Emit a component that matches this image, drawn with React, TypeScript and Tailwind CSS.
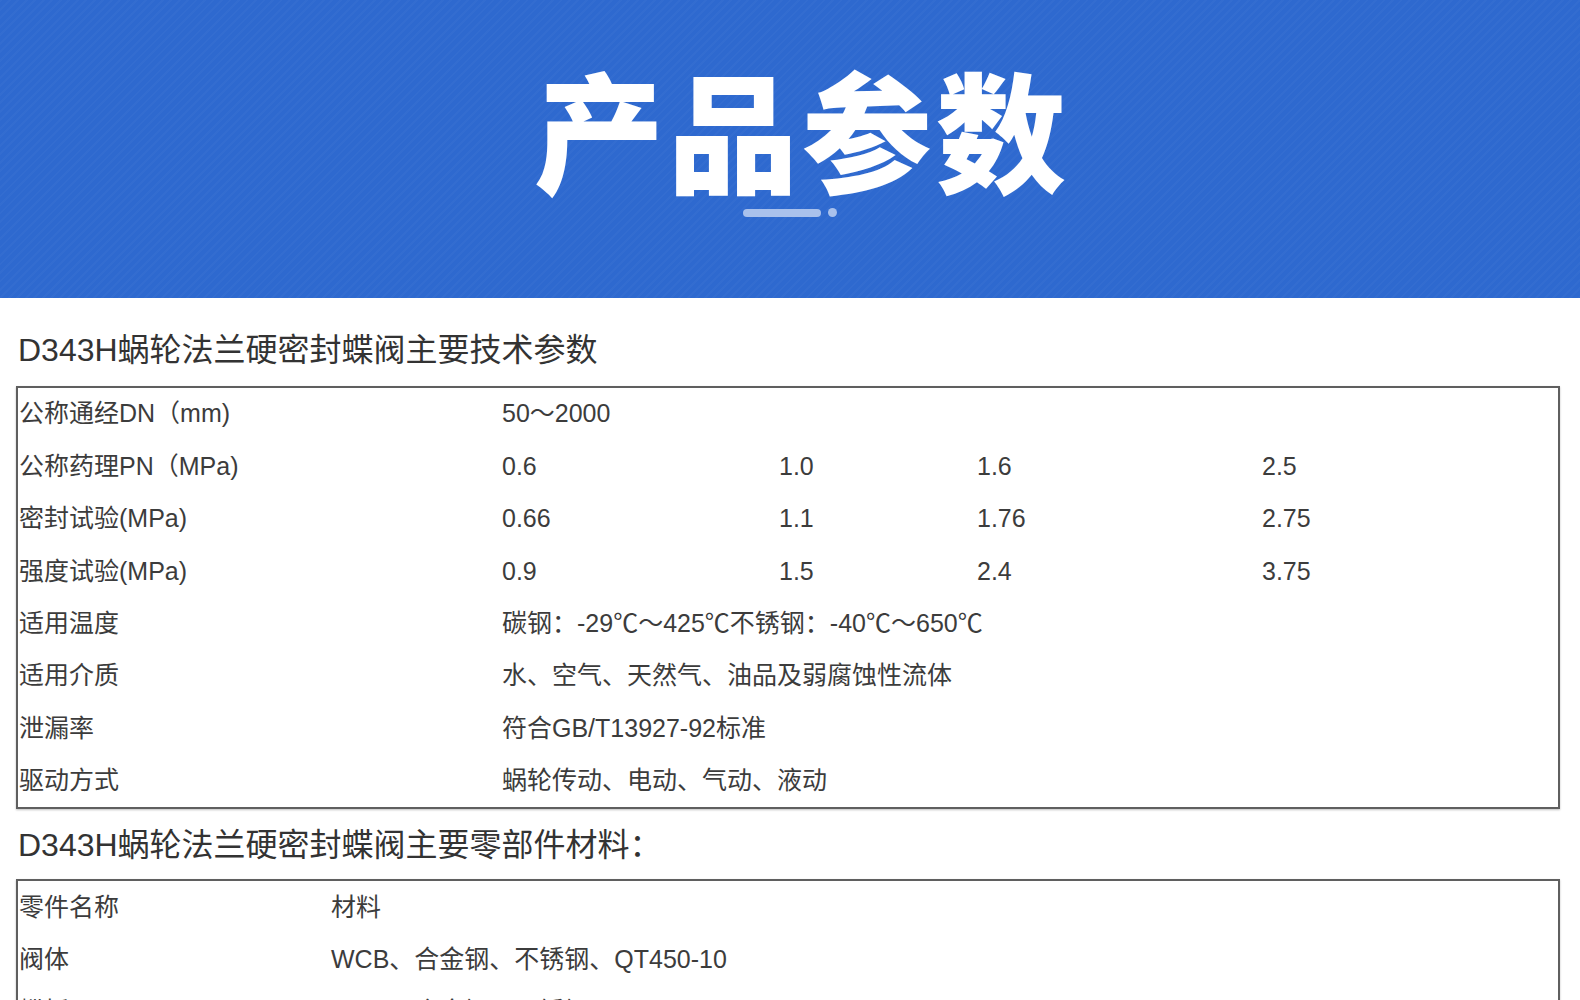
import React from 'react';

const FONT = { fontFamily: '"Liberation Sans", "Noto Sans CJK SC", sans-serif' };

type Row = { label: string; values: string[] };

const specRows: Row[] = [
    { label: '公称通经DN（mm)', values: ['50～2000'] },
    { label: '公称药理PN（MPa)', values: ['0.6', '1.0', '1.6', '2.5'] },
    { label: '密封试验(MPa)', values: ['0.66', '1.1', '1.76', '2.75'] },
    { label: '强度试验(MPa)', values: ['0.9', '1.5', '2.4', '3.75'] },
    { label: '适用温度', values: ['碳钢：-29℃～425℃不锈钢：-40℃～650℃'] },
    { label: '适用介质', values: ['水、空气、天然气、油品及弱腐蚀性流体'] },
    { label: '泄漏率', values: ['符合GB/T13927-92标准'] },
    { label: '驱动方式', values: ['蜗轮传动、电动、气动、液动'] },
];

const partRows = [
    ['零件名称', '材料'],
    ['阀体', 'WCB、合金钢、不锈钢、QT450-10'],
    ['蝶板', 'WCB、合金钢、不锈钢'],
    ['阀杆', '2Cr13、不锈钢'],
    ['密封面', '不锈钢、硬质合金'],
];

function SpecTable() {
    return (
        <div className="mx-[16px] w-[1544px] border-2 border-[#5f5f5f] shadow-[0_1px_2px_rgba(0,0,0,0.25)]">
            {specRows.map((row) => (
                <div
                    key={row.label}
                    className="grid grid-cols-[484px_277px_198px_285px_1fr] h-[52.4px] items-center text-[25px] text-[#3c3c3c]"
                >
                    <div className="pl-[1px] whitespace-nowrap">{row.label}</div>
                    {row.values.length === 1 ? (
                        <div className="col-span-4 whitespace-nowrap">{row.values[0]}</div>
                    ) : (
                        row.values.map((v, i) => (
                            <div key={i} className="whitespace-nowrap">{v}</div>
                        ))
                    )}
                </div>
            ))}
        </div>
    );
}

function PartsTable() {
    return (
        <div className="mx-[16px] w-[1544px] border-2 border-[#5f5f5f] shadow-[0_1px_2px_rgba(0,0,0,0.25)]">
            {partRows.map(([name, mat]) => (
                <div
                    key={name}
                    className="grid grid-cols-[313px_1fr] h-[52.4px] items-center text-[25px] text-[#3c3c3c]"
                >
                    <div className="pl-[1px] whitespace-nowrap">{name}</div>
                    <div className="whitespace-nowrap">{mat}</div>
                </div>
            ))}
        </div>
    );
}

export default function App() {
    return (
        <div className="w-[1580px] min-h-[1000px] bg-white" style={FONT}>
            {/* Blue banner */}
            <div className="h-[298px] bg-[#2e69cf] bg-[repeating-linear-gradient(135deg,rgba(255,255,255,0.025)_0px,rgba(255,255,255,0.025)_2px,transparent_2px,transparent_6px)] flex flex-col items-center pt-[61px]">
                <h1
                    className="text-[130px] leading-none font-black text-white tracking-[4px] ml-[24px]"
                    style={{ fontFamily: '"Noto Sans CJK SC", sans-serif' }}
                >
                    产品参数
                </h1>
                <div className="mt-[17px] flex items-center gap-[7px]">
                    <span className="block w-[78px] h-[8px] rounded-full bg-[#a9c1ec]" />
                    <span className="block w-[9px] h-[9px] rounded-full bg-[#a9c1ec]" />
                </div>
            </div>

            {/* Technical parameters */}
            <h2 className="mt-[32px] mb-[16px] pl-[18px] text-[32px] leading-[40px] text-[#333]">
                D343H蜗轮法兰硬密封蝶阀主要技术参数
            </h2>
            <SpecTable />

            {/* Parts materials */}
            <h2 className="mt-[16px] mb-[14px] pl-[18px] text-[32px] leading-[40px] text-[#333]">
                D343H蜗轮法兰硬密封蝶阀主要零部件材料：
            </h2>
            <PartsTable />
        </div>
    );
}
